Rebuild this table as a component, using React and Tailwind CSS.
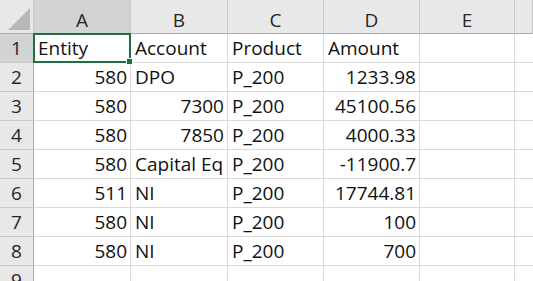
import React from "react";

const cols = ["A", "B", "C", "D", "E", ""];

const rows = [
  [
    { v: "Entity" },
    { v: "Account" },
    { v: "Product" },
    { v: "Amount" },
  ],
  [{ v: "580", r: true }, { v: "DPO" }, { v: "P_200" }, { v: "1233.98", r: true }],
  [{ v: "580", r: true }, { v: "7300", r: true }, { v: "P_200" }, { v: "45100.56", r: true }],
  [{ v: "580", r: true }, { v: "7850", r: true }, { v: "P_200" }, { v: "4000.33", r: true }],
  [{ v: "580", r: true }, { v: "Capital Eq" }, { v: "P_200" }, { v: "-11900.7", r: true }],
  [{ v: "511", r: true }, { v: "NI" }, { v: "P_200" }, { v: "17744.81", r: true }],
  [{ v: "580", r: true }, { v: "NI" }, { v: "P_200" }, { v: "100", r: true }],
  [{ v: "580", r: true }, { v: "NI" }, { v: "P_200" }, { v: "700", r: true }],
  [{ v: "" }, { v: "" }, { v: "" }, { v: "" }],
];

const gridCols = "grid grid-cols-[34px_97px_97px_96px_96px_95px_1fr]";

const App = () => {
  return (
    <div
      className="w-[533px] h-[281px] overflow-hidden bg-white text-[#111] text-[19px]"
      style={{ fontFamily: "'Open Sans', 'Liberation Sans', sans-serif" }}
    >
      {/* column headers */}
      <div className={`${gridCols} h-[34px]`}>
        <div className="relative bg-[#e8e8e8] border-r border-b border-[#c8c8c8] border-b-[#ababab]">
          <svg
            className="absolute right-[3px] bottom-[3px]"
            width="22"
            height="22"
            viewBox="0 0 22 22"
          >
            <polygon points="22,0 22,22 0,22" fill="#b8b8b8" />
          </svg>
        </div>
        {cols.map((c, i) => (
          <div
            key={i}
            className={`${
              i === 0 ? "bg-[#d3d3d3]" : "bg-[#e8e8e8]"
            } flex items-end justify-center pb-[2px] leading-[22px] text-[#262626] border-r border-b border-[#c8c8c8] border-b-[#ababab]`}
          >
            {c}
          </div>
        ))}
      </div>

      {rows.map((row, ri) => (
        <div key={ri} className={`${gridCols} h-[29px]`}>
          <div
            className={`${
              ri === 0 ? "bg-[#d3d3d3]" : "bg-[#e8e8e8]"
            } flex items-end justify-center pb-[3px] leading-[22px] text-[#262626] border-r border-b border-[#c8c8c8] border-r-[#ababab]`}
          >
            {ri + 1}
          </div>
          {row.map((cell, ci) => {
            const active = ri === 0 && ci === 0;
            return (
              <div
                key={ci}
                className={`relative flex items-end whitespace-nowrap pb-[3px] leading-[22px] border-r border-b border-[#dadada] ${
                  cell.r ? "justify-end pr-[3px]" : "justify-start pl-[4px]"
                } ${active ? "overflow-visible z-10" : "overflow-hidden"}`}
              >
                {cell.v}
                {active && (
                  <div className="absolute -left-[1px] -top-[1px] w-[98px] h-[30px] border-2 border-[#1e6e42]">
                    <div className="absolute -right-[4px] -bottom-[4px] w-[7px] h-[7px] bg-[#1e6e42] border border-white" />
                  </div>
                )}
              </div>
            );
          })}
          <div className="border-r border-b border-[#dadada]" />
          <div className="border-b border-[#dadada]" />
        </div>
      ))}
    </div>
  );
};

export default App;
